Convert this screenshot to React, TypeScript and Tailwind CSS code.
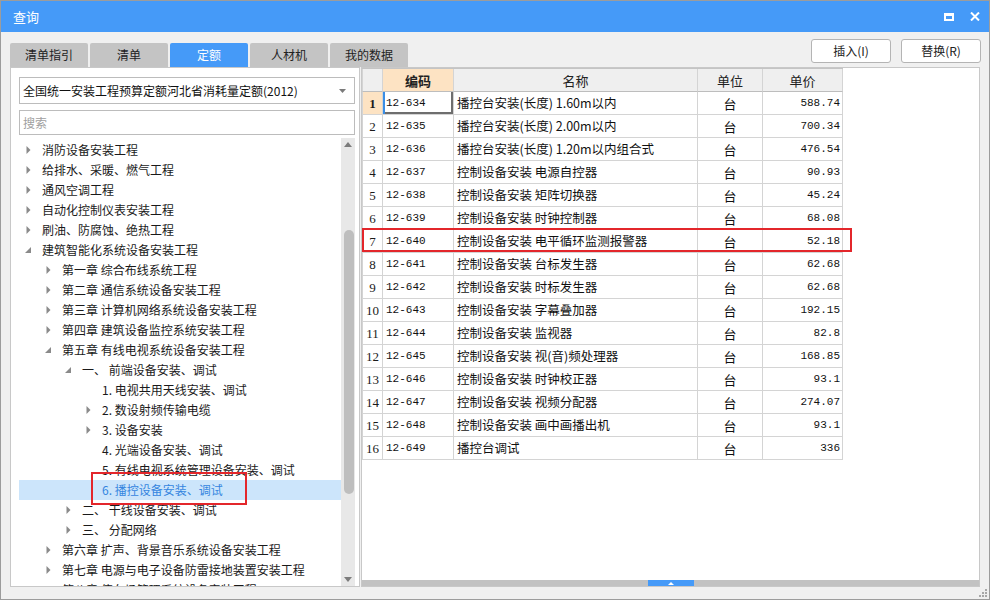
import { ReactNode } from "react";

type TreeItem = { level: number; text: string; arrow: "open" | "closed" | "none"; selected?: boolean };

const treeItems: TreeItem[] = [
  { level: 0, text: "消防设备安装工程", arrow: "closed" },
  { level: 0, text: "给排水、采暖、燃气工程", arrow: "closed" },
  { level: 0, text: "通风空调工程", arrow: "closed" },
  { level: 0, text: "自动化控制仪表安装工程", arrow: "closed" },
  { level: 0, text: "刷油、防腐蚀、绝热工程", arrow: "closed" },
  { level: 0, text: "建筑智能化系统设备安装工程", arrow: "open" },
  { level: 1, text: "第一章 综合布线系统工程", arrow: "closed" },
  { level: 1, text: "第二章 通信系统设备安装工程", arrow: "closed" },
  { level: 1, text: "第三章 计算机网络系统设备安装工程", arrow: "closed" },
  { level: 1, text: "第四章 建筑设备监控系统安装工程", arrow: "closed" },
  { level: 1, text: "第五章 有线电视系统设备安装工程", arrow: "open" },
  { level: 2, text: "一、 前端设备安装、调试", arrow: "open" },
  { level: 3, text: "1. 电视共用天线安装、调试", arrow: "none" },
  { level: 3, text: "2. 数设射频传输电缆", arrow: "closed" },
  { level: 3, text: "3. 设备安装", arrow: "closed" },
  { level: 3, text: "4. 光端设备安装、调试", arrow: "none" },
  { level: 3, text: "5. 有线电视系统管理设备安装、调试", arrow: "none" },
  { level: 3, text: "6. 播控设备安装、调试", arrow: "none", selected: true },
  { level: 2, text: "二、 干线设备安装、调试", arrow: "closed" },
  { level: 2, text: "三、 分配网络", arrow: "closed" },
  { level: 1, text: "第六章 扩声、背景音乐系统设备安装工程", arrow: "closed" },
  { level: 1, text: "第七章 电源与电子设备防雷接地装置安装工程", arrow: "closed" },
  { level: 1, text: "第八章 停车场管理系统设备安装工程", arrow: "closed" },
];

const levelPad = ["pl-0", "pl-[20px]", "pl-[40px]", "pl-[60px]"];

type Row = { code: string; name: string; unit: string; price: string };

const rows: Row[] = [
  { code: "12-634", name: "播控台安装(长度) 1.60m以内", unit: "台", price: "588.74" },
  { code: "12-635", name: "播控台安装(长度) 2.00m以内", unit: "台", price: "700.34" },
  { code: "12-636", name: "播控台安装(长度) 1.20m以内组合式", unit: "台", price: "476.54" },
  { code: "12-637", name: "控制设备安装 电源自控器", unit: "台", price: "90.93" },
  { code: "12-638", name: "控制设备安装 矩阵切换器", unit: "台", price: "45.24" },
  { code: "12-639", name: "控制设备安装 时钟控制器", unit: "台", price: "68.08" },
  { code: "12-640", name: "控制设备安装 电平循环监测报警器", unit: "台", price: "52.18" },
  { code: "12-641", name: "控制设备安装 台标发生器", unit: "台", price: "62.68" },
  { code: "12-642", name: "控制设备安装 时标发生器", unit: "台", price: "62.68" },
  { code: "12-643", name: "控制设备安装 字幕叠加器", unit: "台", price: "192.15" },
  { code: "12-644", name: "控制设备安装 监视器", unit: "台", price: "82.8" },
  { code: "12-645", name: "控制设备安装 视(音)频处理器", unit: "台", price: "168.85" },
  { code: "12-646", name: "控制设备安装 时钟校正器", unit: "台", price: "93.1" },
  { code: "12-647", name: "控制设备安装 视频分配器", unit: "台", price: "274.07" },
  { code: "12-648", name: "控制设备安装 画中画播出机", unit: "台", price: "93.1" },
  { code: "12-649", name: "播控台调试", unit: "台", price: "336" },
];

const tabs = ["清单指引", "清单", "定额", "人材机", "我的数据"];

function Arrow({ kind }: { kind: TreeItem["arrow"] }) {
  if (kind === "closed") {
    return (
      <svg width="5" height="8" viewBox="0 0 5 8">
        <path d="M0.5 0 L4.5 4 L0.5 8 Z" fill="#8a8a8a" />
      </svg>
    );
  }
  if (kind === "open") {
    return (
      <svg width="6" height="6" viewBox="0 0 6 6">
        <path d="M6 0 L6 6 L0 6 Z" fill="#8a8a8a" />
      </svg>
    );
  }
  return null;
}

function Cell({ className, children }: { className: string; children?: ReactNode }) {
  return <div className={`h-[23px] border-r border-b border-[#d4d4d4] flex items-center overflow-hidden whitespace-nowrap ${className}`}>{children}</div>;
}

const cols = "grid grid-cols-[21px_71px_244px_65px_80px]";
const mono = "font-['Liberation_Mono',monospace] text-[11px] text-[#111]";

export default function App() {
  return (
    <div className="w-[990px] h-[600px] border border-[#9c9c9c] bg-[#f0f0f0] flex flex-col relative font-['Noto_Sans_CJK_SC',sans-serif] text-[12px] text-[#1a1a1a] leading-none overflow-hidden">
      {/* title bar */}
      <div className="h-[31px] bg-[#459af8] flex items-center justify-between pl-[12px] pr-[9px] shrink-0">
        <span className="text-white text-[13px]">查询</span>
        <div className="flex items-center gap-[16px]">
          <div className="w-[10px] h-[8px] border-2 border-t-[3px] border-white" />
          <svg width="10" height="9" viewBox="0 0 10 9">
            <path d="M1 0.5 L9 8.5 M9 0.5 L1 8.5" stroke="#fff" strokeWidth="2" />
          </svg>
        </div>
      </div>

      <div className="flex-1 flex flex-col px-[9px]">
        {/* tabs + buttons */}
        <div className="h-[35px] flex justify-between shrink-0">
          <div className="flex gap-[2px] self-end">
            {tabs.map((t, i) => (
              <div
                key={t}
                className={`w-[78px] h-[24px] rounded-t-[2px] flex items-center justify-center ${i === 2 ? "bg-[#459af8] text-white" : "bg-[#c4c4c4] text-[#222]"}`}
              >
                {t}
              </div>
            ))}
          </div>
          <div className="flex gap-[10px] mt-[7px] mr-[-1px]">
            <button className="w-[80px] h-[24px] rounded-[3px] border border-[#b4b4b4] bg-white text-[12px] text-[#222]">插入(I)</button>
            <button className="w-[80px] h-[24px] rounded-[3px] border border-[#b4b4b4] bg-white text-[12px] text-[#222]">替换(R)</button>
          </div>
        </div>

        {/* main */}
        <div className="h-[520px] flex gap-[1px] shrink-0">
          {/* left panel */}
          <div className="w-[350px] border border-[#c8c8c8] bg-white flex flex-col pl-[8px] pr-[4px] relative">
            <div className="mt-[9px] h-[27px] border border-[#bcbcbc] flex items-center justify-between pl-[3px] pr-[8px] text-[12px] text-[#111]">
              <span>全国统一安装工程预算定额河北省消耗量定额(2012)</span>
              <svg width="7" height="4" viewBox="0 0 7 4">
                <path d="M0 0 L7 0 L3.5 4 Z" fill="#7a7a7a" />
              </svg>
            </div>
            <div className="mt-[6px] h-[25px] border border-[#bcbcbc] flex items-center pl-[3px] text-[#a0a0a0]">搜索</div>
            <div className="mt-[3px] flex-1 flex overflow-hidden">
              <div className="flex-1 pt-[2px] overflow-hidden">
                {treeItems.map((it, i) => (
                  <div
                    key={i}
                    className={`h-[20px] flex items-center whitespace-nowrap ${levelPad[it.level]} ${it.selected ? "bg-[#cce5fb] text-[#3585e0]" : ""}`}
                  >
                    <span className="w-[18px] flex justify-center items-center">
                      <Arrow kind={it.arrow} />
                    </span>
                    <span className="ml-[5px]">{it.text}</span>
                  </div>
                ))}
              </div>
              <div className="w-[14px] bg-[#e8e8e8] flex flex-col items-center justify-between py-[4px]">
                <svg width="8" height="5" viewBox="0 0 8 5">
                  <path d="M0 5 L4 0 L8 5 Z" fill="#7c7c7c" />
                </svg>
                <svg width="8" height="5" viewBox="0 0 8 5">
                  <path d="M0 0 L8 0 L4 5 Z" fill="#7c7c7c" />
                </svg>
              </div>
            </div>
            {/* overlay scrollbar thumb */}
            <div className="absolute left-[333px] top-[162px] w-[10px] h-[264px] rounded-full bg-[#bebebe]" />
            {/* red marker */}
            <div className="absolute left-[80px] top-[404px] w-[156px] h-[33px] border-2 border-[#e3262b]" />
          </div>

          {/* right panel */}
          <div className="w-[619px] border border-[#c8c8c8] bg-white flex flex-col relative">
            <div className="w-[481px] border-t border-[#c4c4c4]">
              <div className={`${cols} bg-[#efefef] text-[13px] text-[#222]`}>
                <Cell className="border-l justify-center border-b-[#bdbdbd]" />
                <Cell className="justify-center bg-[#fde3c3] font-bold border-b-[#bdbdbd]">编码</Cell>
                <Cell className="justify-center border-b-[#bdbdbd]">名称</Cell>
                <Cell className="justify-center border-b-[#bdbdbd]">单位</Cell>
                <Cell className="justify-center border-b-[#bdbdbd]">单价</Cell>
              </div>
              {rows.map((r, i) => (
                <div key={r.code} className={cols}>
                  <Cell className={`border-l justify-center font-['Liberation_Serif',serif] text-[13px] ${i === 0 ? "bg-[#fde3c3] font-bold" : ""}`}>{i + 1}</Cell>
                  <Cell className={`pl-[3px] ${mono} ${i === 0 ? "shadow-[inset_2px_0_0_#3a8ee6,inset_-2px_-2px_0_#6e6e6e]" : ""}`}>{r.code}</Cell>
                  <Cell className="pl-[3px] text-[12.5px] text-[#111]">{r.name}</Cell>
                  <Cell className="justify-center text-[13px] text-[#111]">{r.unit}</Cell>
                  <Cell className={`justify-end pr-[2px] ${mono}`}>{r.price}</Cell>
                </div>
              ))}
            </div>
            <div className="flex-1" />
            <div className="h-[6px] bg-[#c2c2c2] flex justify-center">
              <div className="w-[46px] h-[6px] bg-[#459af8] flex items-center justify-center">
                <svg width="6" height="3" viewBox="0 0 6 3">
                  <path d="M0 3 L3 0 L6 3 Z" fill="#fff" />
                </svg>
              </div>
            </div>
            {/* red marker */}
            <div className="absolute left-0 top-[160px] w-[490px] h-[24px] border-2 border-[#e3262b]" />
          </div>
        </div>
      </div>

      {/* resize grip */}
      <div className="absolute right-[2px] bottom-[2px] grid grid-cols-3 gap-[1px]">
        <span className="w-[2px] h-[2px]" />
        <span className="w-[2px] h-[2px]" />
        <span className="w-[2px] h-[2px] bg-[#a8a8a8]" />
        <span className="w-[2px] h-[2px]" />
        <span className="w-[2px] h-[2px] bg-[#a8a8a8]" />
        <span className="w-[2px] h-[2px] bg-[#a8a8a8]" />
        <span className="w-[2px] h-[2px] bg-[#a8a8a8]" />
        <span className="w-[2px] h-[2px] bg-[#a8a8a8]" />
        <span className="w-[2px] h-[2px] bg-[#a8a8a8]" />
      </div>
    </div>
  );
}
